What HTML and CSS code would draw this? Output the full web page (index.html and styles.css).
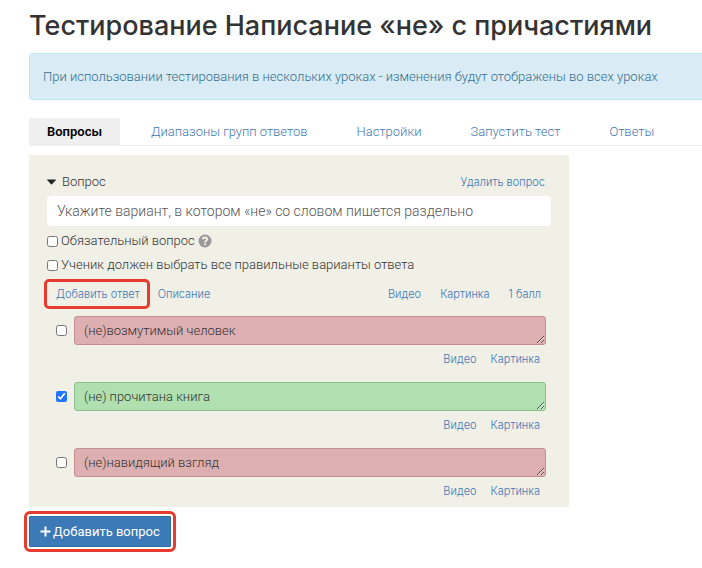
FILE: index.html
```html
<!DOCTYPE html>
<html lang="ru">
<head>
<meta charset="utf-8">
<meta name="viewport" content="width=device-width, initial-scale=1">
<title>Тестирование</title>
<link rel="stylesheet" href="styles.css">
</head>
<body>
<main class="page">
  <h1 class="title">Тестирование Написание «не» с причастиями</h1>
  <p class="alert">При использовании тестирования в нескольких уроках - изменения будут отображены во всех уроках</p>
  <nav class="tabs">
    <a class="tab tab-active" href="#">Вопросы</a>
    <a class="tab" href="#">Диапазоны групп ответов</a>
    <a class="tab" href="#">Настройки</a>
    <a class="tab" href="#">Запустить тест</a>
    <a class="tab" href="#">Ответы</a>
  </nav>
  <section class="question">
    <div class="question-head">
      <svg class="caret" viewBox="0 0 9 6" aria-hidden="true"><path d="M0.6 0.5H8.4Q9 0.7 8.6 1.3L5 5.3Q4.500 5.700 4 5.300L0.400 1.300Q0 0.700 0.600 0.500Z"/></svg>
      <label for="question-text">Вопрос</label>
      <a class="link head-action" href="#">Удалить вопрос</a>
    </div>
    <input class="question-text" id="question-text" type="text" value="Укажите вариант, в котором «не» со словом пишется раздельно">
    <div class="option">
      <input class="check" type="checkbox" id="required">
      <label for="required">Обязательный вопрос</label>
      <svg class="help" viewBox="0 0 14 14" aria-hidden="true"><circle cx="7" cy="7" r="6.500"/><path d="M4.900 5.300C5 2.700 9.100 2.800 9.100 5.200C9.100 6.800 7.100 6.700 7.100 8.500M7.100 9.400V11.200"/></svg>
    </div>
    <div class="option">
      <input class="check" type="checkbox" id="all-correct">
      <label for="all-correct">Ученик должен выбрать все правильные варианты ответа</label>
    </div>
    <div class="toolbar">
      <a class="link marked" href="#">Добавить ответ</a>
      <a class="link" href="#">Описание</a>
      <a class="link push" href="#">Видео</a>
      <a class="link" href="#">Картинка</a>
      <a class="link" href="#">1 балл</a>
    </div>
    <div class="answer">
      <input class="check" type="checkbox" aria-label="Правильный ответ">
      <textarea class="answer-text wrong" rows="1" aria-label="Ответ 1">(не)возмутимый человек</textarea>
      <div class="answer-links"><a class="link" href="#">Видео</a><a class="link" href="#">Картинка</a></div>
    </div>
    <div class="answer">
      <input class="check" type="checkbox" aria-label="Правильный ответ" checked>
      <textarea class="answer-text right" rows="1" aria-label="Ответ 2">(не) прочитана книга</textarea>
      <div class="answer-links"><a class="link" href="#">Видео</a><a class="link" href="#">Картинка</a></div>
    </div>
    <div class="answer">
      <input class="check" type="checkbox" aria-label="Правильный ответ">
      <textarea class="answer-text wrong" rows="1" aria-label="Ответ 3">(не)навидящий взгляд</textarea>
      <div class="answer-links"><a class="link" href="#">Видео</a><a class="link" href="#">Картинка</a></div>
    </div>
  </section>
  <button class="add" type="button">
    <svg class="plus" viewBox="0 0 11 11" aria-hidden="true"><path d="M5.500 0.500V10.500M0.500 5.500H10.500"/></svg>
    <span>Добавить вопрос</span>
  </button>
</main>
</body>
</html>
```
FILE: styles.css
```css
* { box-sizing: border-box; }

body {
  margin: 0;
  background: #fff;
  color: #333;
  font-family: Roboto, Inter, sans-serif;
  font-size: 13px;
  font-weight: 300;
  line-height: 20px;
}

a { color: #3f78b5; text-decoration: none; }

input, textarea, button { font: inherit; color: inherit; }

.page { padding: 9px 0 16px 29px; }

.title {
  margin: 0 0 10px;
  font-family: Inter, sans-serif;
  font-size: 27px;
  font-weight: 500;
  line-height: 34px;
  white-space: nowrap;
}

.alert {
  margin: 0 0 18px;
  padding: 13px;
  border: 1px solid #bce8f1;
  border-right: 0;
  border-radius: 4px 0 0 4px;
  background: #d9ebf5;
  color: #31708f;
  line-height: 19px;
  white-space: nowrap;
}

.tabs {
  display: flex;
  gap: 13px;
  margin-bottom: 9px;
  border-bottom: 1px solid #eee;
}

.tab {
  padding: 0 18px;
  line-height: 27px;
  white-space: nowrap;
}

.tab-active {
  background: #efefef;
  color: #000;
  font-weight: 600;
}

.question {
  max-width: 540px;
  padding: 17px 18px 2px;
  background: #f0f0e7;
}

.question-head {
  display: flex;
  align-items: center;
  height: 20px;
  margin-bottom: 4px;
  padding-right: 6px;
}

.caret { width: 9px; height: 6px; margin-right: 6px; fill: #222; }

.head-action { margin-left: auto; }

.link {
  font-family: Inter, sans-serif;
  font-size: 11px;
}

.question-text {
  display: block;
  width: 100%;
  height: 30px;
  padding: 0 10px;
  border: 0;
  border-radius: 4px;
  background: #fff;
  color: #555;
  font-size: 14px;
}

.check {
  flex: none;
  width: 11px;
  height: 11px;
  margin: 0;
  accent-color: #2374ff;
}

.option {
  display: flex;
  align-items: center;
  gap: 3px;
  height: 24px;
}

.question-text + .option { margin-top: 3px; }

.help { width: 14px; height: 14px; fill: #999; }
.help path { fill: none; stroke: #f0f0e7; stroke-width: 2; }

.toolbar {
  display: flex;
  align-items: center;
  gap: 19px;
  height: 33px;
  margin-bottom: 6px;
  padding: 0 10px;
}

.push { margin-left: auto; }

.marked {
  outline: 3px solid #e63b2e;
  outline-offset: 1px;
  border-radius: 1px;
  margin-left: -9px;
  margin-right: -7px;
  padding: 1px 6px 1px 8px;
}

.answer {
  display: grid;
  grid-template-columns: 11px 1fr;
  column-gap: 7px;
  align-items: center;
  padding: 0 5px 0 9px;
}

.answer + .answer { margin-top: 9px; }

.answer-text {
  display: block;
  width: 100%;
  height: 29px;
  padding: 4px 9px;
  border: 1px solid;
  border-radius: 3px;
  line-height: 19px;
  overflow: hidden;
  resize: vertical;
}

.wrong { background: #deafb0; border-color: #c48f90; }
.right { background: #b0dfb0; border-color: #8fbf8f; }

.answer-links {
  grid-column: 2;
  display: flex;
  justify-content: flex-end;
  gap: 14px;
  padding: 4px 6px;
}

.add {
  display: flex;
  align-items: center;
  gap: 2px;
  height: 31px;
  margin-top: 9px;
  padding: 0 10px;
  border: 1px solid #2e6da4;
  border-radius: 1px;
  outline: 3px solid #e63b2e;
  outline-offset: 2px;
  background: #3c7ab7;
  color: #fff;
  font-weight: 400;
}

.plus { width: 11px; height: 11px; fill: none; stroke: #fff; stroke-width: 2; }
```
